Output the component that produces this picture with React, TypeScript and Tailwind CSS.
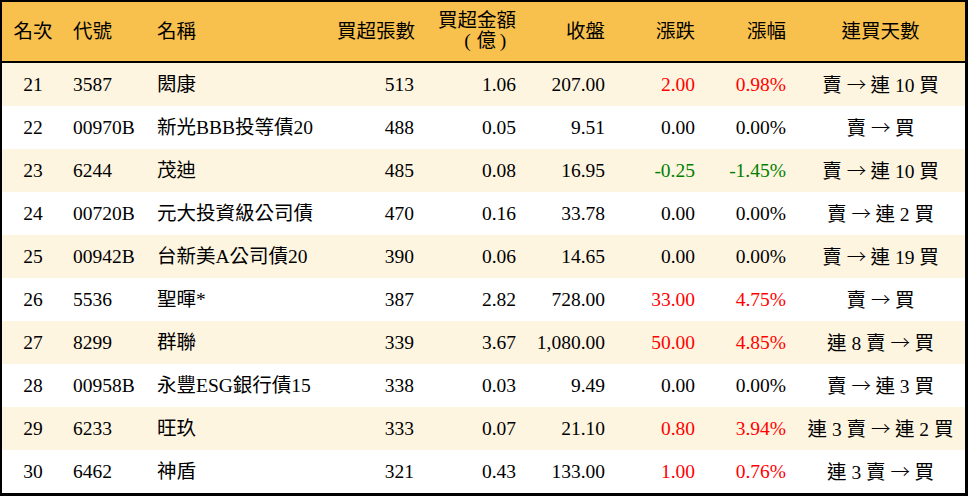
import React from "react";

type Row = {
  rank: string;
  code: string;
  name: string;
  vol: string;
  amt: string;
  close: string;
  chg: string;
  pct: string;
  days: string;
  color: "red" | "green" | "black";
};

const rows: Row[] = [
  { rank: "21", code: "3587", name: "閎康", vol: "513", amt: "1.06", close: "207.00", chg: "2.00", pct: "0.98%", days: "賣 → 連 10 買", color: "red" },
  { rank: "22", code: "00970B", name: "新光BBB投等債20", vol: "488", amt: "0.05", close: "9.51", chg: "0.00", pct: "0.00%", days: "賣 → 買", color: "black" },
  { rank: "23", code: "6244", name: "茂迪", vol: "485", amt: "0.08", close: "16.95", chg: "-0.25", pct: "-1.45%", days: "賣 → 連 10 買", color: "green" },
  { rank: "24", code: "00720B", name: "元大投資級公司債", vol: "470", amt: "0.16", close: "33.78", chg: "0.00", pct: "0.00%", days: "賣 → 連 2 買", color: "black" },
  { rank: "25", code: "00942B", name: "台新美A公司債20", vol: "390", amt: "0.06", close: "14.65", chg: "0.00", pct: "0.00%", days: "賣 → 連 19 買", color: "black" },
  { rank: "26", code: "5536", name: "聖暉*", vol: "387", amt: "2.82", close: "728.00", chg: "33.00", pct: "4.75%", days: "賣 → 買", color: "red" },
  { rank: "27", code: "8299", name: "群聯", vol: "339", amt: "3.67", close: "1,080.00", chg: "50.00", pct: "4.85%", days: "連 8 賣 → 買", color: "red" },
  { rank: "28", code: "00958B", name: "永豐ESG銀行債15", vol: "338", amt: "0.03", close: "9.49", chg: "0.00", pct: "0.00%", days: "賣 → 連 3 買", color: "black" },
  { rank: "29", code: "6233", name: "旺玖", vol: "333", amt: "0.07", close: "21.10", chg: "0.80", pct: "3.94%", days: "連 3 賣 → 連 2 買", color: "red" },
  { rank: "30", code: "6462", name: "神盾", vol: "321", amt: "0.43", close: "133.00", chg: "1.00", pct: "0.76%", days: "連 3 賣 → 買", color: "red" },
];

const grid = "grid grid-cols-[62px_84px_182px_94px_102px_89px_90px_91px_169px]";

function Days({ text }: { text: string }) {
  const parts = text.split("→");
  return (
    <>
      {parts[0]}
      <span className="inline-block w-[19px] text-center" style={{ fontFamily: '"Noto Sans CJK TC", sans-serif', fontWeight: 300 }}>
        →
      </span>
      {parts[1]}
    </>
  );
}

export default function App() {
  return (
    <div
      className="w-[968px] h-[496px] bg-white text-black text-[19.5px] leading-none"
      style={{ fontFamily: '"Liberation Serif", "Noto Sans CJK TC", serif' }}
    >
      <div className="w-[968px] h-[496px] border-t-2 border-l-2 border-r-[3px] border-b-[3px] border-black flex flex-col">
        <div className={`${grid} h-[61px] bg-[#F8C14E] border-b-2 border-black items-center`}>
          <div className="text-center">名次</div>
          <div className="pl-[9px]">代號</div>
          <div className="pl-[9px]">名稱</div>
          <div className="text-right pr-[9px]">買超張數</div>
          <div className="text-right pr-[10px] leading-[20px] -mt-[1px]">
            <div>買超金額</div>
            <div className="pr-[6px]">
              <span className="inline-block w-[18px] text-center">(</span>
              億
              <span className="inline-block w-[14px] text-center">)</span>
            </div>
          </div>
          <div className="text-right pr-[10px]">收盤</div>
          <div className="text-right pr-[10px]">漲跌</div>
          <div className="text-right pr-[10px]">漲幅</div>
          <div className="text-center">連買天數</div>
        </div>
        {rows.map((r, i) => {
          const c =
            r.color === "red" ? "text-[#FF0000]" : r.color === "green" ? "text-[#008000]" : "text-black";
          return (
            <div
              key={r.rank}
              className={`${grid} h-[43px] items-center ${i % 2 === 0 ? "bg-[#FEF5E1]" : "bg-white"}`}
            >
              <div className="text-center">{r.rank}</div>
              <div className="pl-[9px]">{r.code}</div>
              <div className="pl-[9px] whitespace-nowrap">{r.name}</div>
              <div className="text-right pr-[10px]">{r.vol}</div>
              <div className="text-right pr-[10px]">{r.amt}</div>
              <div className="text-right pr-[10px]">{r.close}</div>
              <div className={`text-right pr-[10px] ${c}`}>{r.chg}</div>
              <div className={`text-right pr-[10px] ${c}`}>{r.pct}</div>
              <div className="text-center whitespace-nowrap">
                <Days text={r.days} />
              </div>
            </div>
          );
        })}
      </div>
    </div>
  );
}
